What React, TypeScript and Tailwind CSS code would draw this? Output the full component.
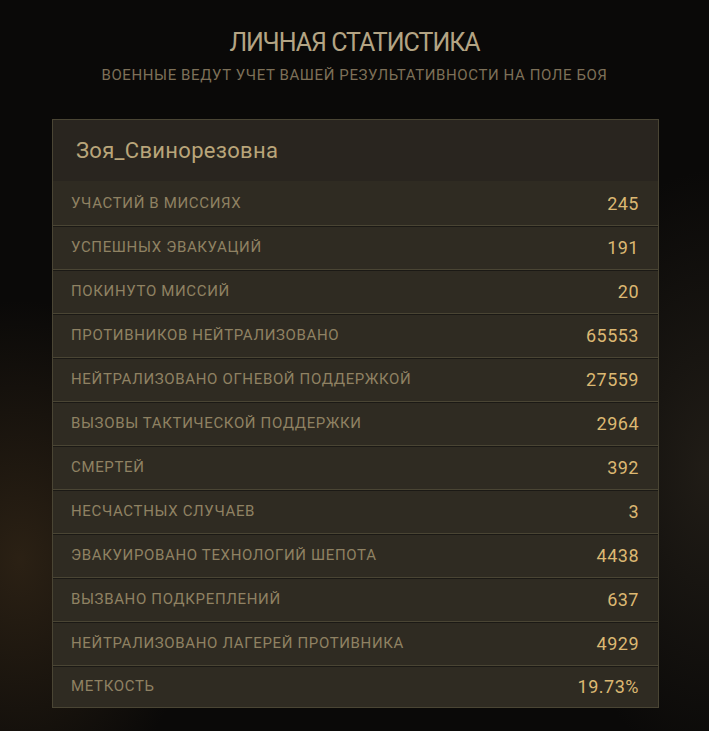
const STATS: [string, string][] = [
  ['УЧАСТИЙ В МИССИЯХ', '245'],
  ['УСПЕШНЫХ ЭВАКУАЦИЙ', '191'],
  ['ПОКИНУТО МИССИЙ', '20'],
  ['ПРОТИВНИКОВ НЕЙТРАЛИЗОВАНО', '65553'],
  ['НЕЙТРАЛИЗОВАНО ОГНЕВОЙ ПОДДЕРЖКОЙ', '27559'],
  ['ВЫЗОВЫ ТАКТИЧЕСКОЙ ПОДДЕРЖКИ', '2964'],
  ['СМЕРТЕЙ', '392'],
  ['НЕСЧАСТНЫХ СЛУЧАЕВ', '3'],
  ['ЭВАКУИРОВАНО ТЕХНОЛОГИЙ ШЕПОТА', '4438'],
  ['ВЫЗВАНО ПОДКРЕПЛЕНИЙ', '637'],
  ['НЕЙТРАЛИЗОВАНО ЛАГЕРЕЙ ПРОТИВНИКА', '4929'],
  ['МЕТКОСТЬ', '19.73%'],
];

export default function App() {
  return (
    <div className="min-h-[731px] w-full bg-[#0a0908] bg-[radial-gradient(ellipse_180px_260px_at_20px_560px,rgba(70,52,30,0.55),transparent),radial-gradient(ellipse_160px_300px_at_709px_470px,rgba(60,52,40,0.45),transparent)] font-['Roboto',sans-serif]">
      <div className="flex flex-col items-center pt-[27px]">
        <h1 className="text-[25px] leading-[32px] tracking-[-1px] text-[#b3a484]">
          ЛИЧНАЯ СТАТИСТИКА
        </h1>
        <p className="mt-[6px] text-[15px] leading-[20px] tracking-[0.6px] text-[#7d7058]">
          ВОЕННЫЕ ВЕДУТ УЧЕТ ВАШЕЙ РЕЗУЛЬТАТИВНОСТИ НА ПОЛЕ БОЯ
        </p>
      </div>

      <div className="mx-[52px] mt-[34px] w-[607px] border border-[#4a4534] bg-[#2f2b22]">
        <div className="flex h-[61px] items-center bg-[#29251f] px-[23px] text-[22px] tracking-[0.3px] text-[#b9a57a]">
          Зоя_Свинорезовна
        </div>
        {STATS.map(([label, value], i) => (
          <div
            key={label}
            className={`flex items-center justify-between pl-[18px] pr-[19px] ${
              i === 0
                ? 'h-[44px]'
                : i === STATS.length - 1
                  ? 'h-[42px] border-t border-[#4a4534] shadow-[inset_0_1px_0_#1b1915]'
                  : 'h-[44px] border-t border-[#4a4534] shadow-[inset_0_1px_0_#1b1915]'
            }`}
          >
            <span className="text-[15px] tracking-[0.65px] text-[#8f8263]">{label}</span>
            <span className="text-[18px] tracking-[0.5px] text-[#dcb872]">{value}</span>
          </div>
        ))}
      </div>
    </div>
  );
}
